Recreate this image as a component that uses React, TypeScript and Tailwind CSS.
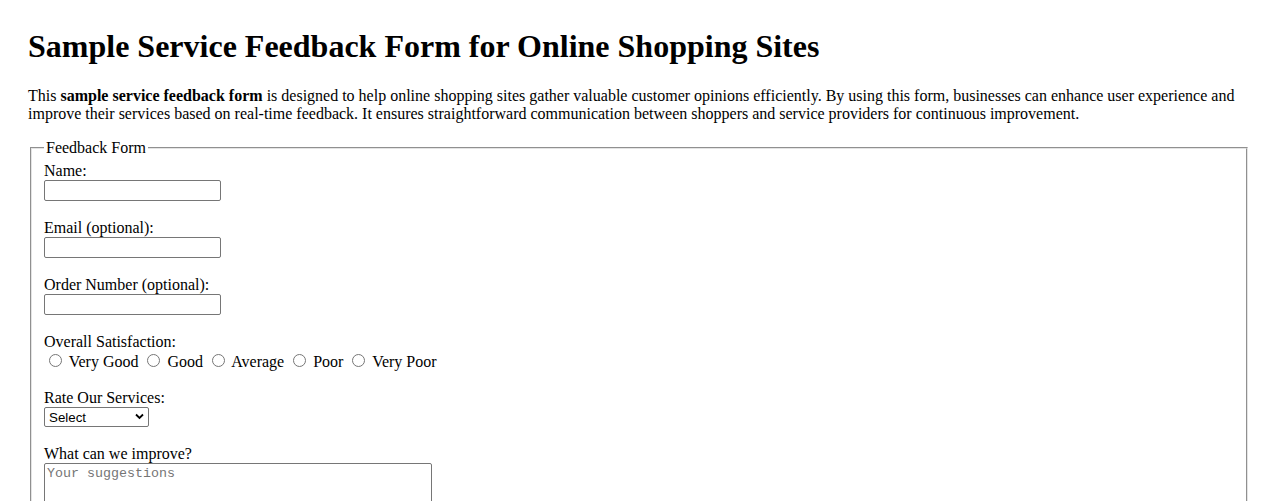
import React from "react";

const serif = "font-['Liberation_Serif','Times_New_Roman',serif]";
const field =
  "inline-block align-baseline h-[21px] w-[177px] border border-[#767676] rounded-[2px] bg-white px-[2px] py-[1px] text-[13.333px] leading-[normal] font-['Liberation_Sans',Arial,sans-serif]";

const ratings = ["Very Good", "Good", "Average", "Poor", "Very Poor"];

const App = () => {
  return (
    <div className={`${serif} text-black bg-white min-h-[501px] px-[28px] pt-[28px] text-[16px] leading-[normal]`}>
      <h1 className="text-[32px] font-bold leading-[normal] mb-[22.4px]">
        Sample Service Feedback Form for Online Shopping Sites
      </h1>
      <p className="mb-[16px]">
        This <strong className="font-bold">sample service feedback form</strong> is designed to help
        online shopping sites gather valuable customer opinions efficiently. By using this form,
        businesses can enhance user experience and improve their services based on real-time
        feedback. It ensures straightforward communication between shoppers and service providers
        for continuous improvement.
      </p>
      <form>
        <fieldset className="mx-[2px] px-[12px] pt-[5px] pb-[10px] border-2 [border-style:groove] border-[#e4e4e4]">
          <legend className="px-[2px]">Feedback Form</legend>

          <label htmlFor="name">Name:</label>
          <br />
          <input id="name" type="text" className={field} />
          <br />
          <br />

          <label htmlFor="email">Email (optional):</label>
          <br />
          <input id="email" type="email" className={field} />
          <br />
          <br />

          <label htmlFor="order">Order Number (optional):</label>
          <br />
          <input id="order" type="text" className={field} />
          <br />
          <br />

          <label>Overall Satisfaction:</label>
          <br />
          {ratings.map((r, idx) => (
            <React.Fragment key={r}>
              <input
                id={`sat-${idx}`}
                type="radio"
                name="satisfaction"
                className="ml-[5px] mr-[3px] mt-[3px] w-[13px] h-[13px] align-baseline"
              />{" "}
              <label htmlFor={`sat-${idx}`}>{r}</label>{" "}
            </React.Fragment>
          ))}
          <br />
          <br />

          <label htmlFor="rate">Rate Our Services:</label>
          <br />
          <span className="relative inline-block align-baseline">
            <select
              id="rate"
              defaultValue=""
              className="appearance-none block h-[20px] w-[105px] border border-[#767676] rounded-[2px] bg-white pl-[4px] text-[13.333px] leading-[normal] font-['Liberation_Sans',Arial,sans-serif] text-black"
            >
              <option value="">Select</option>
              <option>Excellent</option>
              <option>Good</option>
              <option>Fair</option>
              <option>Poor</option>
            </select>
            <svg
              className="absolute right-[5px] top-[6px] pointer-events-none"
              width="9"
              height="7"
              viewBox="0 0 9 7"
            >
              <path d="M1 1.5 L4.5 5 L8 1.5" fill="none" stroke="#000" strokeWidth="1.8" />
            </svg>
          </span>
          <br />
          <br />

          <label htmlFor="improve">What can we improve?</label>
          <br />
          <textarea
            id="improve"
            rows={4}
            placeholder="Your suggestions"
            className="inline-block align-bottom w-[388px] h-[68px] border border-[#767676] rounded-[2px] bg-white p-[2px] text-[13.333px] leading-[normal] font-['Liberation_Mono','Courier_New',monospace] placeholder:text-[#757575] resize"
          />
          <br />
          <br />
          <button
            type="submit"
            className="px-[6px] py-[1px] border border-[#767676] rounded-[2px] bg-[#efefef] text-[13.333px] font-['Liberation_Sans',Arial,sans-serif]"
          >
            Submit Feedback
          </button>
        </fieldset>
      </form>
    </div>
  );
};

export default App;
